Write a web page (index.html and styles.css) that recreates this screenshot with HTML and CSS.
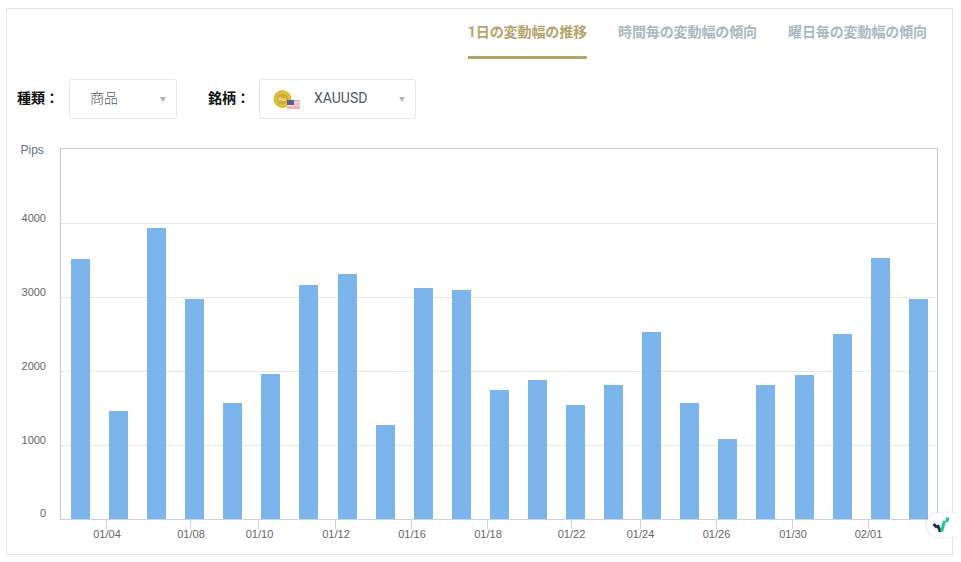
FILE: index.html
```html
<!DOCTYPE html>
<html lang="ja">
<head>
<meta charset="utf-8">
<title>変動幅</title>
<link rel="stylesheet" href="styles.css">
</head>
<body>
<main class="card">
  <nav class="tabs">
    <a class="tab active">1日の変動幅の推移</a>
    <a class="tab">時間毎の変動幅の傾向</a>
    <a class="tab">曜日毎の変動幅の傾向</a>
  </nav>
  <div class="filters">
    <span class="label">種類：</span>
    <div class="select select-type"><span class="value value-cjk">商品</span><i class="caret"></i></div>
    <span class="label label-second">銘柄：</span>
    <div class="select select-symbol">
      <svg class="symbol-icon" width="29" height="22" viewBox="0 0 29 22">
        <circle cx="9.5" cy="11" r="9" fill="#dcbc2e"/>
        <circle cx="9.5" cy="11" r="6.4" fill="#cdae35" stroke="#e6cc55" stroke-width="1"/>
        <text class="coin-text" x="9" y="13" text-anchor="middle">Au</text>
        <rect x="14" y="12" width="13" height="9" fill="#f0b4bc"/>
        <rect x="14" y="14" width="13" height="1" fill="#fff" opacity=".6"/>
        <rect x="14" y="17" width="13" height="1" fill="#fff" opacity=".6"/>
        <rect x="14" y="12" width="7" height="5" fill="#5a5f8f"/>
      </svg>
      <span class="value value-latin">XAUUSD</span><i class="caret"></i>
    </div>
  </div>
  <svg class="chart" width="944" height="413" viewBox="7 142 944 413">
    <g class="grid">
      <line x1="60" x2="938" y1="223.5" y2="223.5"/>
      <line x1="60" x2="938" y1="297.5" y2="297.5"/>
      <line x1="60" x2="938" y1="371.5" y2="371.5"/>
      <line x1="60" x2="938" y1="445.5" y2="445.5"/>
    </g>
    <rect class="plot" x="60.5" y="148.5" width="877" height="371"/>
    <g class="bars">
      <rect x="71" y="259" width="19" height="260"/>
      <rect x="109" y="411" width="19" height="108"/>
      <rect x="147" y="228" width="19" height="291"/>
      <rect x="185" y="299" width="19" height="220"/>
      <rect x="223" y="403" width="19" height="116"/>
      <rect x="261" y="374" width="19" height="145"/>
      <rect x="299" y="285" width="19" height="234"/>
      <rect x="338" y="274" width="19" height="245"/>
      <rect x="376" y="425" width="19" height="94"/>
      <rect x="414" y="288" width="19" height="231"/>
      <rect x="452" y="290" width="19" height="229"/>
      <rect x="490" y="390" width="19" height="129"/>
      <rect x="528" y="380" width="19" height="139"/>
      <rect x="566" y="405" width="19" height="114"/>
      <rect x="604" y="385" width="19" height="134"/>
      <rect x="642" y="332" width="19" height="187"/>
      <rect x="680" y="403" width="19" height="116"/>
      <rect x="718" y="439" width="19" height="80"/>
      <rect x="756" y="385" width="19" height="134"/>
      <rect x="795" y="375" width="19" height="144"/>
      <rect x="833" y="334" width="19" height="185"/>
      <rect x="871" y="258" width="19" height="261"/>
      <rect x="909" y="299" width="19" height="220"/>
    </g>
    <line class="axis" x1="60" x2="938" y1="519.5" y2="519.5"/>
    <g class="ticks">
      <line x1="106.5" x2="106.5" y1="520" y2="529"/>
      <line x1="190.5" x2="190.5" y1="520" y2="529"/>
      <line x1="258.5" x2="258.5" y1="520" y2="529"/>
      <line x1="335.5" x2="335.5" y1="520" y2="529"/>
      <line x1="411.5" x2="411.5" y1="520" y2="529"/>
      <line x1="487.5" x2="487.5" y1="520" y2="529"/>
      <line x1="571.5" x2="571.5" y1="520" y2="529"/>
      <line x1="640.5" x2="640.5" y1="520" y2="529"/>
      <line x1="716.5" x2="716.5" y1="520" y2="529"/>
      <line x1="792.5" x2="792.5" y1="520" y2="529"/>
      <line x1="868.5" x2="868.5" y1="520" y2="529"/>
    </g>
    <text class="pips" x="20.5" y="154">Pips</text>
    <g class="y-labels">
      <text x="46" y="222">4000</text>
      <text x="46" y="296">3000</text>
      <text x="46" y="370">2000</text>
      <text x="46" y="444">1000</text>
      <text x="46" y="517">0</text>
    </g>
    <g class="x-labels">
      <text x="107" y="538">01/04</text>
      <text x="191" y="538">01/08</text>
      <text x="259.5" y="538">01/10</text>
      <text x="336" y="538">01/12</text>
      <text x="412" y="538">01/16</text>
      <text x="488" y="538">01/18</text>
      <text x="571.5" y="538">01/22</text>
      <text x="640.5" y="538">01/24</text>
      <text x="716.5" y="538">01/26</text>
      <text x="793" y="538">01/30</text>
      <text x="868.5" y="538">02/01</text>
    </g>
  </svg>
</main>
<div class="badge">
  <svg width="18" height="18" viewBox="0 0 18 18">
    <path d="M1.5 8 L5 11.5 M5.5 9 L8.5 16" class="mark-dark"/>
    <path d="M9.5 15.5 L12.5 5 M14.5 6 L16 1.5" class="mark-green"/>
  </svg>
</div>
</body>
</html>
```
FILE: styles.css
```css
* { box-sizing: border-box; }
html, body { margin: 0; padding: 0; background: #fff; }
body {
  width: 961px;
  height: 562px;
  overflow: hidden;
  font-family: Roboto, "Noto Sans CJK JP", sans-serif;
}
.card {
  width: 947px;
  height: 547px;
  margin: 8px 0 0 6px;
  border: 1px solid #dfe8e8;
  background: #fff;
}
.tabs {
  display: flex;
  justify-content: flex-end;
  gap: 31px;
  padding: 0 25px 0 0;
  height: 50px;
}
.tab {
  height: 50px;
  padding-top: 13px;
  font-size: 14px;
  line-height: 20px;
  font-weight: 700;
  letter-spacing: -0.1px;
  color: #a9b8c0;
  white-space: nowrap;
}
.tab.active {
  color: #b5a36a;
  border-bottom: 3px solid #b5a36a;
}
.filters {
  display: flex;
  align-items: center;
  margin-top: 20px;
  padding-left: 10px;
  height: 40px;
}
.label {
  width: 42px;
  margin-right: 10px;
  padding-bottom: 4px;
  font-size: 14px;
  font-weight: 700;
  color: #111;
  white-space: nowrap;
}
.label-second { margin-left: 31px; margin-right: 9px; }
.select {
  position: relative;
  display: flex;
  align-items: center;
  height: 40px;
  border: 1px solid #e2e9ea;
  border-radius: 3px;
  background: #fff;
  font-size: 14px;
  color: #4d5a66;
}
.select-type { width: 108px; padding-left: 20px; }
.select-symbol { width: 157px; padding-left: 13px; }
.value-cjk { padding-bottom: 4px; font-weight: 300; }
.value-latin { padding-bottom: 2px; }
.symbol-icon { margin-right: 12px; flex: none; }
.coin-text { font: 700 6px "Liberation Sans", sans-serif; fill: #f4e9b0; }
.caret {
  position: absolute;
  top: 17px;
  right: 10px;
  width: 0;
  height: 0;
  border-left: 3.5px solid transparent;
  border-right: 3.5px solid transparent;
  border-top: 5px solid #a9b3bb;
}
.chart { display: block; margin-top: 23px; }
.plot { fill: none; stroke: #c6cbcc; stroke-width: 1; }
.grid line { stroke: #e4e9ea; stroke-width: 1; }
.bars rect { fill: #7cb5ec; }
.axis, .ticks line { stroke: #c9d2e4; stroke-width: 1; }
.chart text { font-family: "Liberation Sans", Arial, sans-serif; font-size: 11px; }
.chart .pips { fill: #5f6f85; font-size: 12px; }
.y-labels text { text-anchor: end; fill: #666; }
.x-labels text { text-anchor: middle; fill: #666; }
.badge {
  position: absolute;
  left: 927px;
  top: 513px;
  width: 34px;
  height: 24px;
  display: flex;
  align-items: center;
  padding-left: 5px;
  border-radius: 12px 0 0 12px;
  background: #fff;
  box-shadow: -1px 0 3px rgba(0,0,0,.1);
}
.mark-dark { fill: none; stroke: #14304a; stroke-width: 3; }
.mark-green { fill: none; stroke: #1fc98a; stroke-width: 3; }
```
